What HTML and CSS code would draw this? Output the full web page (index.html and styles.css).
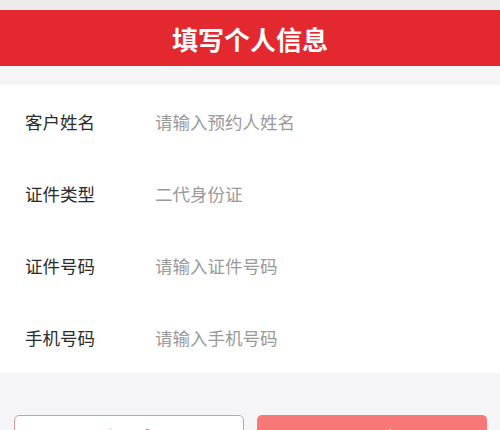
FILE: index.html
```html
<!DOCTYPE html>
<html lang="zh">
<head>
<meta charset="utf-8">
<link rel="stylesheet" href="styles.css">
</head>
<body>
<div class="topstrip"></div>
<header class="header">填写个人信息</header>
<div class="spacer"></div>
<main class="card">
  <div class="row"><span class="label">客户姓名</span><span class="ph">请输入预约人姓名</span></div>
  <div class="row"><span class="label">证件类型</span><span class="ph">二代身份证</span></div>
  <div class="row"><span class="label">证件号码</span><span class="ph">请输入证件号码</span></div>
  <div class="row"><span class="label">手机号码</span><span class="ph">请输入手机号码</span></div>
</main>
<div class="actions">
  <button class="btn btn-outline">上一步</button>
  <button class="btn btn-fill">下一步</button>
</div>
</body>
</html>
```
FILE: styles.css
```css
html, body {
  margin: 0;
  padding: 0;
}
body {
  background: #f5f5f7;
  font-family: "Noto Sans CJK SC", "Noto Sans", sans-serif;
  width: 500px;
  overflow: hidden;
}
.topstrip {
  height: 10px;
  background: #ececec;
}
.header {
  height: 56px;
  background: #e3292f;
  color: #ffffff;
  font-size: 26px;
  font-weight: 700;
  display: flex;
  align-items: center;
  justify-content: center;
}
.spacer {
  height: 19px;
}
.card {
  background: #ffffff;
  display: flex;
  flex-direction: column;
}
.row {
  height: 72px;
  display: flex;
  align-items: center;
  padding-left: 25px;
  font-size: 17.5px;
}
.label {
  width: 130px;
  color: #2b2b2b;
}
.ph {
  color: #9a9a9a;
}
.actions {
  display: flex;
  gap: 13px;
  padding: 42px 13px 0 14px;
}
.btn {
  flex: 0 0 230px;
  height: 44px;
  border-radius: 5px;
  font-family: "Noto Sans CJK SC", "Noto Sans", sans-serif;
  font-size: 18px;
  display: flex;
  align-items: center;
  justify-content: center;
  box-sizing: border-box;
  padding: 0;
}
.btn-outline {
  background: #ffffff;
  border: 1px solid #d99a9e;
  color: #e3292f;
}
.btn-fill {
  background: #f87878;
  border: none;
  color: #ffffff;
}
```
